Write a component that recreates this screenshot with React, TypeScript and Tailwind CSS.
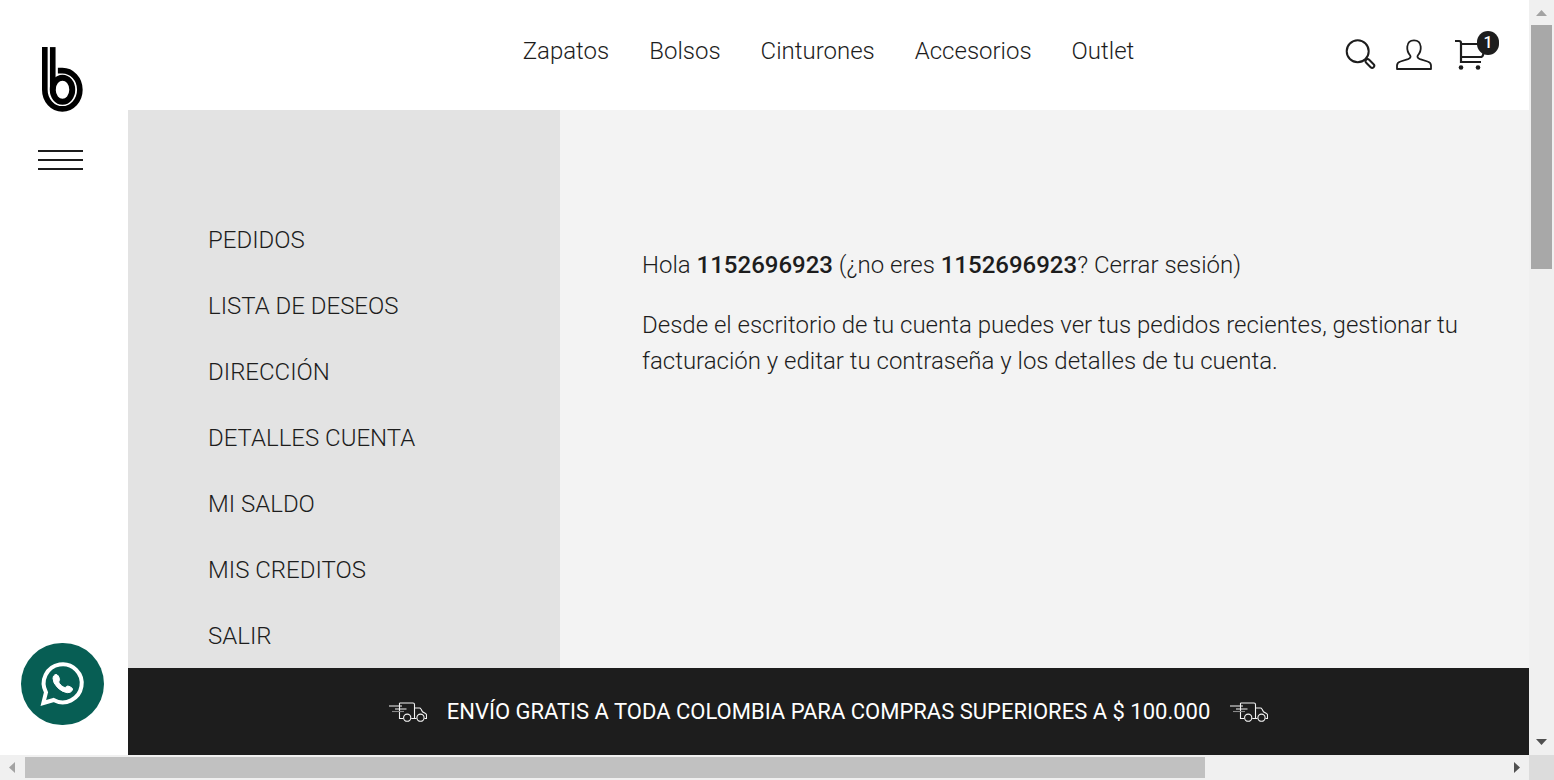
import React from 'react';

const categories = ['Zapatos', 'Bolsos', 'Cinturones', 'Accesorios', 'Outlet'];
const accountLinks = [
  'PEDIDOS',
  'LISTA DE DESEOS',
  'DIRECCIÓN',
  'DETALLES CUENTA',
  'MI SALDO',
  'MIS CREDITOS',
  'SALIR',
];

function Logo() {
  return (
    <svg viewBox="126 51 124 196" className="h-[65px] w-[41px]" fill="none" stroke="#000" aria-hidden="true">
      <path strokeWidth="17" d="M134.5 51V180A53 58 0 0 0 240.5 180A53 58 0 0 0 187 122H174" />
      <path strokeWidth="17" d="M158.5 51V180" />
      <ellipse strokeWidth="18" cx="188" cy="180" rx="29.5" ry="36.5" />
    </svg>
  );
}

function WhatsAppIcon() {
  return (
    <svg viewBox="0 0 162 162" className="h-[54px] w-[54px]" fill="none" stroke="#fff" aria-hidden="true">
      <path strokeWidth="12" d="M53 129A57 57 0 1 0 30 106L22 138Z" />
      <path
        fill="#fff"
        stroke="#fff"
        strokeWidth="3"
        strokeLinejoin="round"
        d="M57 53Q64 51 67 57L70 64Q72 68 69 72Q67 75 70 79Q76 88 84 91Q88 93 91 89Q94 86 99 88L107 92Q111 95 109 100Q104 108 94 107Q78 105 65 92Q51 78 51 64Q51 56 57 53Z"
      />
    </svg>
  );
}

function SearchIcon() {
  return (
    <svg viewBox="0 0 32 32" className="h-8 w-8" fill="none" stroke="#1d1d1d" strokeWidth="2" aria-hidden="true">
      <circle cx="13.7" cy="12.3" r="11" />
      <rect x="25.7" y="10.2" width="10.5" height="4.2" rx="2.1" transform="rotate(45 13.7 12.3)" />
    </svg>
  );
}

function UserIcon() {
  return (
    <svg viewBox="0 0 36 32" className="h-8 w-9" fill="none" stroke="#1d1d1d" strokeWidth="1.8" strokeLinejoin="round" aria-hidden="true">
      <path d="M1 30V26.5Q1 23.6 4.5 22.5L12 20.2Q15.5 18.8 14.2 16.5Q10.8 12.5 11.3 7.5Q12 1.3 18 1.3Q24 1.3 24.7 7.5Q25.2 12.5 21.8 16.5Q20.5 18.8 24 20.2L31.5 22.5Q35 23.6 35 26.5V30Z" />
      <path d="M1 30H35" />
    </svg>
  );
}

function CartIcon() {
  return (
    <svg viewBox="0 0 34 32" className="h-8 w-[34px]" fill="none" stroke="#1d1d1d" strokeWidth="2.2" aria-hidden="true">
      <path d="M0 2H4Q6 2 6 4V23H26" />
      <path d="M6 5H31L28 16Q27.500 18 25.500 18H6" />
      <circle cx="6" cy="28.5" r="2.3" fill="#1d1d1d" stroke="none" />
      <circle cx="23" cy="28.5" r="2.3" fill="#1d1d1d" stroke="none" />
    </svg>
  );
}

function TruckIcon() {
  return (
    <svg viewBox="0 0 38 20" className="h-5 w-[38px] shrink-0" fill="none" stroke="#f3f3f3" strokeWidth="1.1" aria-hidden="true">
      <path d="M10.5 1H24Q25.500 1 25.500 2.500V16.500H22.200M14.200 16.500H10.500V1M25.500 6H30.500Q31.500 6 32 7L33.500 9.800L36.500 11.500Q37.500 12 37.500 13V16.500H35.500M27.500 16.500H25.500" />
      <circle cx="18.200" cy="15.700" r="3.600" />
      <circle cx="31.500" cy="15.700" r="3.600" />
      <path d="M0 4H13M6 7H17.500" />
      <path d="M3 9.500H15" stroke="#8a8a8a" />
    </svg>
  );
}

export default function App() {
  return (
    <div className="grid h-screen grid-cols-[minmax(0,1fr)_25px] grid-rows-[minmax(0,1fr)_25px] overflow-hidden bg-white font-['Roboto',sans-serif] text-[#1d1d1d]">
      <div className="flex min-h-0 min-w-0">
        <aside className="flex w-32 shrink-0 flex-col justify-between pt-[47px] pb-[30px]">
          <div className="flex flex-col gap-[38px]">
            <a href="#inicio" aria-label="Inicio" className="ml-[42px] block w-fit">
              <Logo />
            </a>
            <button type="button" aria-label="Menú" className="ml-[38px] flex w-[45px] flex-col gap-[7px]">
              <span className="h-[2px] w-full bg-[#1d1d1d]" />
              <span className="h-[2px] w-full bg-[#1d1d1d]" />
              <span className="h-[2px] w-full bg-[#1d1d1d]" />
            </button>
          </div>
          <a
            href="#whatsapp"
            aria-label="WhatsApp"
            className="ml-[21px] flex h-[82px] w-[83px] items-center justify-center rounded-full bg-[#075e54]"
          >
            <WhatsAppIcon />
          </a>
        </aside>

        <div className="flex min-w-0 flex-1 flex-col">
          <header className="grid h-[110px] shrink-0 grid-cols-[1fr_auto_1fr] items-start">
            <nav aria-label="Categorías" className="col-start-2 flex gap-10 pt-[33px] text-2xl leading-9 font-light">
              {categories.map((name) => (
                <a key={name} href={`#${name.toLowerCase()}`}>
                  {name}
                </a>
              ))}
            </nav>
            <div className="flex justify-end gap-5 pt-[39px] pr-10">
              <button type="button" aria-label="Buscar">
                <SearchIcon />
              </button>
              <button type="button" aria-label="Mi cuenta">
                <UserIcon />
              </button>
              <button type="button" aria-label="Carrito" className="relative ml-[3px]">
                <CartIcon />
                <span className="absolute -top-2 -right-2.5 flex h-6 w-[22px] items-center justify-center rounded-full bg-[#1d1d1d] text-base font-medium text-white">
                  1
                </span>
              </button>
            </div>
          </header>

          <div className="flex min-h-0 flex-1 overflow-hidden text-2xl font-light">
            <nav aria-label="Cuenta" className="flex w-[432px] shrink-0 flex-col gap-[30px] bg-[#e3e3e3] pt-28 pl-20 leading-9">
              {accountLinks.map((name) => (
                <a key={name} href="#cuenta">
                  {name}
                </a>
              ))}
            </nav>
            <main className="min-w-0 flex-1 overflow-hidden bg-[#f3f3f3] pt-[137px] pl-[82px] leading-9 whitespace-nowrap">
              <p className="mb-6">
                Hola <strong className="font-medium">1152696923</strong> (¿no eres{' '}
                <strong className="font-medium">1152696923</strong>? <a href="#salir">Cerrar sesión</a>)
              </p>
              <p>
                Desde el escritorio de tu cuenta puedes ver tus pedidos recientes, gestionar tu
                <br />
                facturación y editar tu contraseña y los detalles de tu cuenta.
              </p>
            </main>
          </div>

          <footer className="flex h-[87px] shrink-0 items-center justify-center gap-5 bg-[#1d1d1d] text-[22px] whitespace-nowrap text-white">
            <TruckIcon />
            <p>ENVÍO GRATIS A TODA COLOMBIA PARA COMPRAS SUPERIORES A $ 100.000</p>
            <TruckIcon />
          </footer>
        </div>
      </div>

      <div className="flex flex-col items-center justify-between bg-[#f0f0f0]" aria-hidden="true">
        <svg viewBox="0 0 25 25" className="h-[25px] w-[25px]">
          <path d="M7 16H18L12.500 10Z" fill="#a3a3a3" />
        </svg>
        <div className="flex w-full flex-1 flex-col px-[2px]">
          <div className="h-[244px] w-full bg-[#a8a8a8]" />
        </div>
        <svg viewBox="0 0 25 25" className="h-[25px] w-[25px]">
          <path d="M7 9H18L12.500 15Z" fill="#505050" />
        </svg>
      </div>

      <div className="flex items-center bg-[#f0f0f0]" aria-hidden="true">
        <svg viewBox="0 0 25 25" className="h-[25px] w-[25px]">
          <path d="M15 7V18L9 12.500Z" fill="#a3a3a3" />
        </svg>
        <div className="flex h-full flex-1 py-[2px]">
          <div className="h-full w-[1180px] bg-[#c1c1c1]" />
        </div>
        <svg viewBox="0 0 25 25" className="h-[25px] w-[25px]">
          <path d="M10 7V18L16 12.500Z" fill="#505050" />
        </svg>
      </div>
      <div className="bg-[#dcdcdc]" />
    </div>
  );
}
